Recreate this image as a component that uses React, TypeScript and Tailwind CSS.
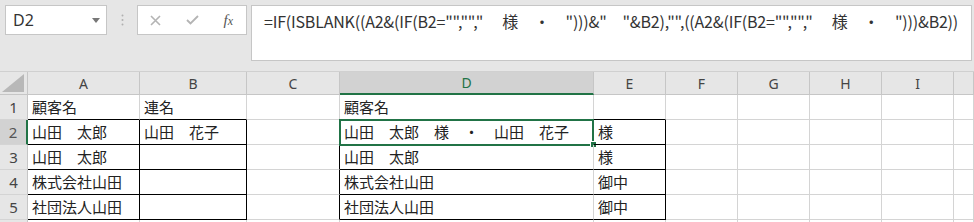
import React from "react";

const cols = [
  { key: "", w: 28 },
  { key: "A", w: 112 },
  { key: "B", w: 107 },
  { key: "C", w: 93 },
  { key: "D", w: 254 },
  { key: "E", w: 72 },
  { key: "F", w: 72 },
  { key: "G", w: 72 },
  { key: "H", w: 72 },
  { key: "I", w: 72 },
  { key: "J", w: 20 },
];

const data: Record<string, string[]> = {
  A: ["顧客名", "山田　太郎", "山田　太郎", "株式会社山田", "社団法人山田"],
  B: ["連名", "山田　花子", "", "", ""],
  D: ["顧客名", "山田　太郎　様　・　山田　花子", "山田　太郎", "株式会社山田", "社団法人山田"],
  E: ["", "様", "様", "御中", "御中"],
};

// cells inside the black-bordered ranges A2:B5 and D2:E5
function bottomBlack(col: string, row: number) {
  return ["A", "B", "D", "E"].includes(col) && row >= 1 && row <= 5;
}
function rightBlack(col: string, row: number) {
  return ["A", "B", "C", "E"].includes(col) && row >= 2 && row <= 5;
}

const formula =
  '=IF(ISBLANK((A2&(IF(B2="",""," 　様　・　")))&"　"&B2),"",((A2&(IF(B2="",""," 　様　・　")))&B2))';

export default function App() {
  const rows = [1, 2, 3, 4, 5, 6];
  return (
    <div
      className="w-[974px] h-[222px] overflow-hidden bg-[#e6e6e6] text-[#222]"
      style={{ fontFamily: '"Noto Sans", "Noto Sans CJK JP", sans-serif' }}
    >
      {/* Formula bar area */}
      <div className="h-[72px] flex items-start pt-[5px] pl-[5px] gap-[4px] border-b border-[#d0d0d0]">
        <div className="w-[102px] h-[30px] bg-white border border-[#c6c6c6] flex items-center justify-between pl-[7px] pr-[6px]">
          <span className="text-[16px] text-[#333]">D2</span>
          <svg width="8" height="5" viewBox="0 0 8 5">
            <path d="M0 0 L8 0 L4 5 Z" fill="#777" />
          </svg>
        </div>
        <div className="w-[22px] h-[30px] flex items-center justify-center">
          <svg width="3" height="12" viewBox="0 0 3 12">
            <circle cx="1.5" cy="1.5" r="1" fill="#b0b0b0" />
            <circle cx="1.5" cy="6" r="1" fill="#b0b0b0" />
            <circle cx="1.5" cy="10.5" r="1" fill="#b0b0b0" />
          </svg>
        </div>
        <div className="w-[110px] h-[30px] bg-white border border-[#c6c6c6] flex items-center">
          <div className="w-[36px] flex justify-center">
            <svg width="11" height="11" viewBox="0 0 11 11">
              <path d="M1 1 L10 10 M10 1 L1 10" stroke="#b4b4b4" strokeWidth="1.6" />
            </svg>
          </div>
          <div className="w-[38px] flex justify-center">
            <svg width="13" height="10" viewBox="0 0 13 10">
              <path d="M1 5 L4.5 8.5 L12 1" stroke="#b4b4b4" strokeWidth="1.8" fill="none" />
            </svg>
          </div>
          <div className="w-[36px] flex justify-center">
            <span
              className="italic text-[15px] text-[#555]"
              style={{ fontFamily: '"Liberation Serif", serif' }}
            >
              f<span className="text-[12px]">x</span>
            </span>
          </div>
        </div>
        <div className="w-[721px] h-[56px] bg-white border border-[#c6c6c6] pl-[12px] pt-[3px]">
          <span
            className="text-[16px] text-[#333] whitespace-pre tracking-[-0.2px]"
            style={{ fontFamily: '"Noto Sans CJK JP", sans-serif' }}
          >
            {formula}
          </span>
        </div>
      </div>

      {/* Sheet grid */}
      <div className="flex bg-white">
        {cols.map((c, ci) => {
          const selectedCol = c.key === "D";
          return (
            <div key={ci} className="flex flex-col shrink-0" style={{ width: c.w }}>
              {/* column header */}
              <div
                className={`h-[23px] flex items-center justify-center text-[14px] border-r border-b ${
                  ci === 0
                    ? "bg-[#e6e6e6] border-[#c6c6c6] items-end justify-end pr-[3px] pb-[2px]"
                    : selectedCol
                    ? "bg-[#d2d2d2] text-[#217346] border-r-[#c6c6c6] border-b-2 border-b-[#217346]"
                    : "bg-[#e6e6e6] text-[#444] border-[#c6c6c6]"
                }`}
              >
                {ci === 0 ? (
                  <svg width="22" height="18" viewBox="0 0 22 18">
                    <path d="M22 0 L22 18 L0 18 Z" fill="#b8b8b8" />
                  </svg>
                ) : c.key === "J" ? (
                  ""
                ) : (
                  c.key
                )}
              </div>
              {rows.map((r) => {
                if (ci === 0) {
                  const sel = r === 2;
                  return (
                    <div
                      key={r}
                      className={`h-[25px] flex items-center justify-center text-[15px] border-b border-[#d4d4d4] ${
                        sel
                          ? "bg-[#d2d2d2] text-[#555] border-r-2 border-r-[#217346]"
                          : "bg-[#e6e6e6] text-[#444] border-r border-r-[#c6c6c6]"
                      }`}
                    >
                      {r <= 5 ? r : ""}
                    </div>
                  );
                }
                const text = data[c.key]?.[r - 1] ?? "";
                const bb = bottomBlack(c.key, r);
                const rb = rightBlack(c.key, r);
                const selCell = c.key === "D" && r === 2;
                return (
                  <div
                    key={r}
                    className={`relative h-[25px] flex items-center pl-[4px] text-[15px] whitespace-pre border-r border-b ${
                      bb ? "border-b-black" : "border-b-[#d4d4d4]"
                    } ${rb ? "border-r-black" : "border-r-[#d4d4d4]"}`}
                    style={{ fontFamily: '"Noto Sans CJK JP", sans-serif' }}
                  >
                    {text}
                    {selCell && (
                      <>
                        <div className="absolute -left-[1px] -top-[1px] w-[255px] h-[27px] border-2 border-[#217346]" />
                        <div className="absolute -right-[4px] -bottom-[4px] w-[7px] h-[7px] bg-[#217346] border border-white" />
                      </>
                    )}
                  </div>
                );
              })}
            </div>
          );
        })}
      </div>
    </div>
  );
}
